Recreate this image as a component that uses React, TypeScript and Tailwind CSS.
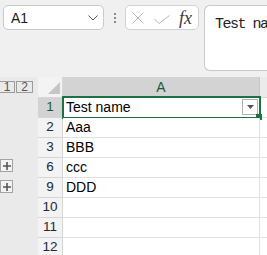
import React from "react";

const rows: { n: number; text: string; plus?: boolean }[] = [
  { n: 1, text: "Test name" },
  { n: 2, text: "Aaa" },
  { n: 3, text: "BBB" },
  { n: 6, text: "ccc", plus: true },
  { n: 9, text: "DDD", plus: true },
  { n: 10, text: "" },
  { n: 11, text: "" },
  { n: 12, text: "" },
];

function PlusBox() {
  return (
    <div className="mt-[1px] flex h-[13px] w-[13px] items-center justify-center border border-[#a3a3a3] bg-[#f3f3f3]">
      <svg width="8" height="8" viewBox="0 0 8 8">
        <path d="M4 0v8M0 4h8" stroke="#555" strokeWidth="1.6" />
      </svg>
    </div>
  );
}

export default function App() {
  return (
    <div className="h-[255px] w-[267px] overflow-hidden bg-[#f0f0f0] font-['Liberation_Sans',Arial,sans-serif]">
      {/* formula bar */}
      <div className="flex h-[77px] items-start pl-[3px] pt-[5px]">
        <div className="flex h-[25px] w-[101px] shrink-0 items-center justify-between rounded-[5px] border border-[#cacaca] bg-white pl-[7px] pr-[5px]">
          <span className="text-[14px] leading-none text-[#1a1a1a]">A1</span>
          <svg width="10" height="6" viewBox="0 0 10 6">
            <path d="M0.5 0.5l4.5 4.5 4.5-4.5" stroke="#555" fill="none" strokeWidth="1" />
          </svg>
        </div>
        <div className="ml-[10px] mt-[8px] flex shrink-0 flex-col gap-[2px]">
          <span className="h-[2px] w-[2px] bg-[#8a8a8a]" />
          <span className="h-[2px] w-[2px] bg-[#8a8a8a]" />
          <span className="h-[2px] w-[2px] bg-[#8a8a8a]" />
        </div>
        <div className="ml-[9px] flex h-[25px] w-[74px] shrink-0 items-center rounded-[5px] border border-[#d2d2d2] bg-white">
          <svg className="ml-[6px]" width="12" height="12" viewBox="0 0 12 12">
            <path d="M0.5 0.5l11 11M11.5 0.5l-11 11" stroke="#b5b5b5" strokeWidth="1" />
          </svg>
          <svg className="ml-[10px] mt-[4px]" width="16" height="9" viewBox="0 0 16 9">
            <path d="M0.5 4l4.5 4.5 10.5-8" stroke="#b5b5b5" fill="none" strokeWidth="1" />
          </svg>
          <span className="ml-[9px] font-['Liberation_Serif',serif] text-[18px] italic leading-none text-[#3a3a3a]">
            fx
          </span>
        </div>
        <div className="ml-[5px] h-[66px] w-[120px] shrink-0 overflow-hidden rounded-l-[6px] border border-r-0 border-[#cacaca] bg-white pl-[10px] pt-[5px]">
          <span className="whitespace-nowrap font-['Liberation_Mono',monospace] text-[15px] leading-[18px] tracking-[-1.5px] text-[#222]">
            Test name
          </span>
        </div>
      </div>

      {/* sheet */}
      <div className="flex">
        {/* outline pane */}
        <div className="w-[38px] shrink-0 bg-[#eaeaea]">
          <div className="flex h-[21px] items-start pt-[4px]">
            <div className="-ml-[1px] flex h-[12px] w-[16px] items-center justify-center border border-[#9c9c9c] text-[12px] leading-none text-[#555]">
              1
            </div>
            <div className="ml-[1px] flex h-[12px] w-[17px] items-center justify-center border border-[#9c9c9c] text-[12px] leading-none text-[#555]">
              2
            </div>
          </div>
          {rows.map((r) => (
            <div key={r.n} className="h-[20px]">
              {r.plus && <PlusBox />}
            </div>
          ))}
        </div>

        {/* grid */}
        <div className="flex-1">
          <div className="flex h-[21px]">
            <div className="relative w-[25px] shrink-0 border-r border-b border-[#d6d6d6] bg-[#f3f3f3]">
              <svg className="absolute left-[10px] top-[5px]" width="12" height="12" viewBox="0 0 12 12">
                <path d="M12 0V12H0Z" fill="#c6c6c6" />
              </svg>
            </div>
            <div className="flex w-[197px] shrink-0 items-center justify-center border-r border-[#c8c8c8] bg-[#d3d3d3] text-[14px] text-[#1d5a36]">
              A
            </div>
            <div className="flex-1 border-b border-[#d6d6d6] bg-[#ebebeb]" />
          </div>
          {rows.map((r, i) => (
            <div key={r.n} className="flex h-[20px]">
              <div
                className={`flex w-[25px] shrink-0 items-center justify-center border-r border-b border-[#d6d6d6] text-[13.5px] ${
                  i === 0 ? "bg-[#d3d3d3] text-[#1d5a36]" : "bg-[#f3f3f3] text-[#222a38]"
                }`}
              >
                {r.n}
              </div>
              <div className="relative flex w-[197px] shrink-0 items-center border-r border-b border-[#e1e1e1] bg-white pl-[3px] text-[14px] text-black">
                {r.text}
                {i === 0 && (
                  <>
                    <div className="absolute left-[-1px] top-[-2px] h-[23px] w-[199px] border-2 border-[#1e7145]" />
                    <div className="absolute left-[179px] top-[1px] flex h-[16px] w-[16px] items-center justify-center border border-[#b0b0b0] bg-white">
                      <svg width="7" height="4" viewBox="0 0 7 4">
                        <path d="M0 0h7L3.5 4Z" fill="#555" />
                      </svg>
                    </div>
                    <div className="absolute left-[193px] top-[16px] h-[6px] w-[6px] bg-[#1e7145]" />
                  </>
                )}
              </div>
              <div className="flex-1 border-b border-[#e1e1e1] bg-white" />
            </div>
          ))}
        </div>
      </div>
    </div>
  );
}
